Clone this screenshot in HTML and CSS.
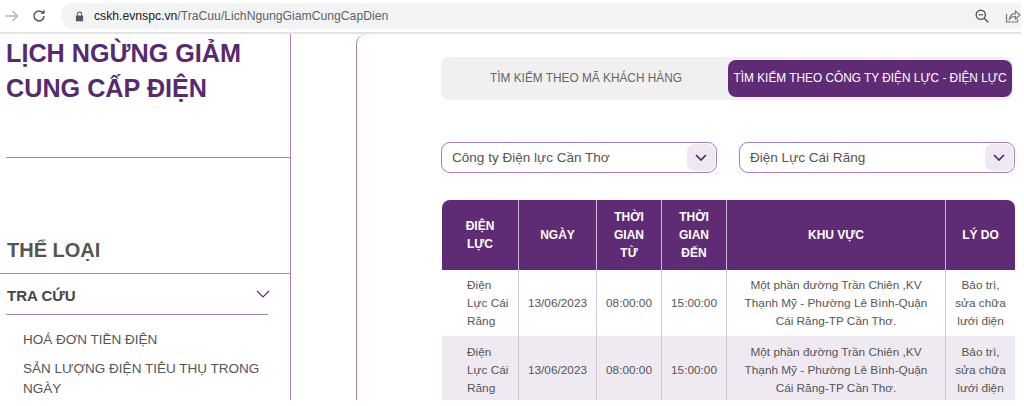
FILE: index.html
```html
<!DOCTYPE html>
<html lang="vi">
<head>
<meta charset="utf-8">
<title>Lịch ngừng giảm cung cấp điện</title>
<link rel="stylesheet" href="styles.css">
</head>
<body>
<div class="page">
  <header class="toolbar">
    <svg class="tb-icon" width="16" height="16" viewBox="0 0 16 16"><path d="M1.5 8h12M8.5 3l5 5-5 5" fill="none" stroke="#b4b6b9" stroke-width="1.4"/></svg>
    <svg class="tb-icon" width="16" height="16" viewBox="0 0 16 16"><path d="M13 8a5 5 0 1 1-1.5-3.6" fill="none" stroke="#54575a" stroke-width="1.5"/><path d="M13.6 1.6v4.2H9.4z" fill="#54575a"/></svg>
    <div class="address">
      <svg class="lock" width="9" height="11" viewBox="0 0 10 12"><path d="M2.6 5V3.4a2.4 2.4 0 0 1 4.8 0V5" fill="none" stroke="#54575a" stroke-width="1.2"/><rect x="1" y="5" width="8" height="6.4" rx="1" fill="#54575a"/></svg>
      <span class="url"><span class="host">cskh.evnspc.vn</span>/TraCuu/LichNgungGiamCungCapDien</span>
      <span class="spacer"></span>
      <svg class="zoom-icon" width="16" height="16" viewBox="0 0 16 16"><circle cx="6.800" cy="6.800" r="4.600" fill="none" stroke="#54575a" stroke-width="1.4"/><path d="M10.200 10.200l4 4" stroke="#54575a" stroke-width="1.6"/><path d="M4.600 6.800h4.400" stroke="#54575a" stroke-width="1.2"/></svg>
      <svg class="share-icon" width="16" height="16" viewBox="0 0 16 16"><path d="M1.500 6v8h11v-3" fill="none" stroke="#77797c" stroke-width="1.2"/><path d="M4.500 11c.5-3.500 3-5.300 6-5.300V3l4.500 4-4.500 4V8.400c-2.500 0-4.500.8-6 2.600z" fill="none" stroke="#77797c" stroke-width="1.2"/></svg>
    </div>
  </header>
  <main class="main">
    <aside class="sidebar">
      <h1 class="title">LỊCH NGỪNG GIẢM<br>CUNG CẤP ĐIỆN</h1>
      <h2 class="category">THỂ LOẠI</h2>
      <div class="group">
        <div class="group-head">
          <span>TRA CỨU</span>
          <svg width="14" height="8" viewBox="0 0 14 8"><path d="M1 1l6 6 6-6" fill="none" stroke="#5f2b74" stroke-width="1.2"/></svg>
        </div>
        <ul class="menu">
          <li>HOÁ ĐƠN TIỀN ĐIỆN</li>
          <li>SẢN LƯỢNG ĐIỆN TIÊU THỤ TRONG NGÀY</li>
        </ul>
      </div>
    </aside>
    <section class="content">
      <div class="tabs">
        <div class="tab">TÌM KIẾM THEO MÃ KHÁCH HÀNG</div>
        <div class="tab active">TÌM KIẾM THEO CÔNG TY ĐIỆN LỰC - ĐIỆN LỰC</div>
      </div>
      <div class="filters">
        <div class="select"><span>Công ty Điện lực Cần Thơ</span><span class="arrow"><svg width="12" height="7" viewBox="0 0 12 7"><path d="M1 1l5 5 5-5" fill="none" stroke="#4a2060" stroke-width="1.6"/></svg></span></div>
        <div class="select"><span>Điện Lực Cái Răng</span><span class="arrow"><svg width="12" height="7" viewBox="0 0 12 7"><path d="M1 1l5 5 5-5" fill="none" stroke="#4a2060" stroke-width="1.6"/></svg></span></div>
      </div>
      <table class="grid">
        <colgroup><col class="c1"><col class="c2"><col class="c3"><col class="c4"><col class="c5"><col class="c6"></colgroup>
        <thead>
          <tr><th>ĐIỆN<br>LỰC</th><th>NGÀY</th><th>THỜI<br>GIAN<br>TỪ</th><th>THỜI<br>GIAN<br>ĐẾN</th><th>KHU VỰC</th><th>LÝ DO</th></tr>
        </thead>
        <tbody>
          <tr><td class="unit">Điện<br>Lực Cái<br>Răng</td><td>13/06/2023</td><td>08:00:00</td><td>15:00:00</td><td>Một phần đường Trần Chiên ,KV<br>Thạnh Mỹ - Phường Lê Bình-Quận<br>Cái Răng-TP Cần Thơ.</td><td>Bảo trì,<br>sửa chữa<br>lưới điện</td></tr>
          <tr class="even"><td class="unit">Điện<br>Lực Cái<br>Răng</td><td>13/06/2023</td><td>08:00:00</td><td>15:00:00</td><td>Một phần đường Trần Chiên ,KV<br>Thạnh Mỹ - Phường Lê Bình-Quận<br>Cái Răng-TP Cần Thơ.</td><td>Bảo trì,<br>sửa chữa<br>lưới điện</td></tr>
        </tbody>
      </table>
    </section>
  </main>
</div>
</body>
</html>
```
FILE: styles.css
```css
* { box-sizing: border-box; }
html, body { margin: 0; padding: 0; background: #fff; }
body { font-family: "Liberation Sans", Arial, sans-serif; color: #555; }
.page { width: 1021px; height: 400px; overflow: hidden; display: flex; flex-direction: column; }
.toolbar { height: 34px; flex: none; display: flex; align-items: flex-start; gap: 11px; padding: 8px 0 0 4px; border-bottom: 2px solid #e3e3e3; }
.tb-icon { flex: none; }
.address { margin: -5px 0 0 3px; flex: 1; height: 26px; background: #f1f3f4; border-radius: 13px 0 0 13px; display: flex; align-items: center; gap: 10px; padding: 0 0 0 14px; }
.url { font-size: 12.2px; color: #5f6368; }
.host { color: #202124; }
.spacer { flex: 1; }
.zoom-icon { margin-right: 5px; }
.main { flex: 1; display: flex; min-height: 0; }
.sidebar { width: 291px; flex: none; border-right: 1px solid #a67fbb; }
.title { margin: 0 0 0 6px; padding-top: 2px; height: 124px; font-size: 25.2px; line-height: 35px; font-weight: 700; color: #572a6e; border-bottom: 1px solid #a67fbb; }
.category { margin: 80px 0 0; padding: 0 0 11px 7px; font-size: 20px; line-height: 24px; font-weight: 700; color: #555; border-bottom: 1px solid #a67fbb; }
.group { padding: 0 22px 0 6px; }
.group-head { display: flex; justify-content: space-between; align-items: center; height: 41px; padding: 3px 0 0 1px; border-bottom: 1px solid #a67fbb; font-size: 15px; font-weight: 700; color: #444; }
.group-head svg { margin: -3px -2px 0 0; }
.menu { list-style: none; margin: 15px 0 0; padding: 0 0 0 17px; font-size: 13.5px; line-height: 20px; color: #555; }
.menu li + li { margin-top: 9px; }
.content { margin-left: 65px; flex: 1; border-left: 1px solid #a67fbb; border-top-left-radius: 10px; padding: 23px 6px 0 84px; min-width: 0; }
.tabs { display: flex; align-items: center; height: 43px; width: 572px; background: #f0f0f0; border-radius: 8px; padding: 0 1px 0 3px; }
.tab { flex: 1; text-align: center; font-size: 11.85px; color: #666; padding-bottom: 2px; }
.tab.active { flex: none; width: 284px; height: 37px; line-height: 36px; padding: 0; background: #5f2b74; color: #fff; border-radius: 8px; white-space: nowrap; }
.filters { display: flex; justify-content: space-between; margin-top: 42px; }
.select { width: 276px; height: 31px; border: 1px solid #a67fbb; border-radius: 9px; display: flex; align-items: center; justify-content: space-between; padding: 1px 1px 1px 10px; font-size: 13.55px; color: #555; }
.arrow { width: 28px; height: 27px; background: #eee8f2; border-radius: 8px; display: flex; align-items: center; justify-content: center; }
.grid { margin: 27px 0 0 1px; width: 573px; table-layout: fixed; border-collapse: separate; border-spacing: 0; font-size: 11.8px; line-height: 18px; color: #555; text-align: center; }
.c1 { width: 77px; } .c2 { width: 78px; } .c3 { width: 65px; } .c4 { width: 65px; } .c5 { width: 219px; } .c6 { width: 69px; }
.grid th { height: 70px; padding: 0; background: #5f2b74; color: #fff; font-size: 12px; font-weight: 700; border-right: 1px solid #c9b8d3; }
.grid th:first-child { border-top-left-radius: 8px; }
.grid th:last-child { border-top-right-radius: 8px; border-right: 0; }
.grid td { height: 66px; padding: 0; border-right: 1px solid #cfc8d4; }
.grid td:last-child { border-right: 0; }
.grid td.unit { text-align: left; padding-left: 25px; }
.even td { background: #efeaf2; height: 68px; }
```
